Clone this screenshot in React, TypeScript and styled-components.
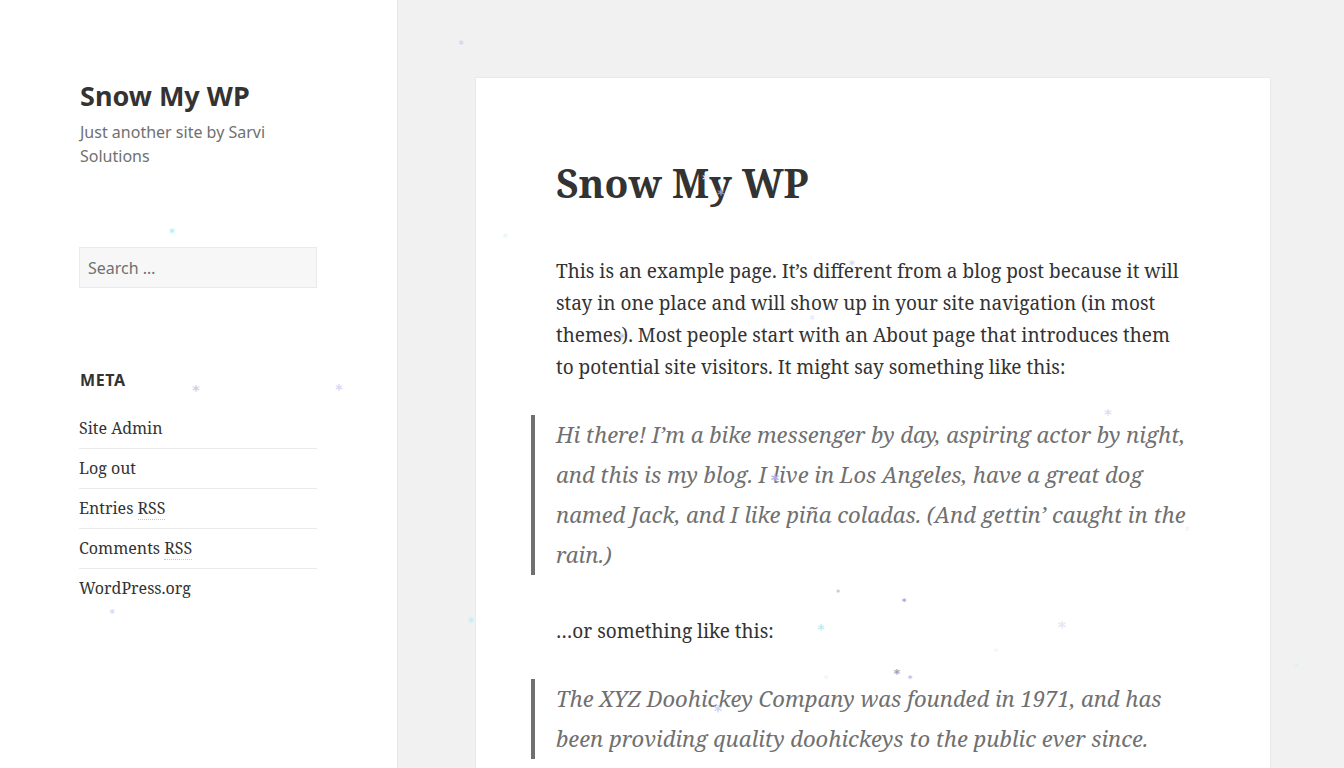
import React from "react";
import styled, { createGlobalStyle } from "styled-components";

const Global = createGlobalStyle`
  html, body { margin: 0; padding: 0; }
  body { background: #f1f1f1; overflow: hidden; }
`;

const serif = `"Noto Serif", "DejaVu Serif Condensed", "DejaVu Serif", serif`;
const sans = `"Noto Sans", "Open Sans", sans-serif`;

const Page = styled.div`
  position: relative;
  display: flex;
  height: 768px;
  overflow: hidden;
  background: #f1f1f1;
`;

const Sidebar = styled.aside`
  width: 397px;
  flex: none;
  background: #fff;
  box-shadow: 0 0 1px rgba(0, 0, 0, 0.25);
  padding: 77px 0 0 79px;
  box-sizing: border-box;
`;

const SideInner = styled.div`
  width: 238px;
`;

const SiteTitle = styled.h1`
  margin: 0;
  padding-left: 1px;
  font-family: ${sans};
  font-weight: 700;
  font-size: 27px;
  line-height: 38px;
  color: #333;
`;

const Description = styled.p`
  margin: 5px 0 0;
  padding-left: 1px;
  font-family: ${sans};
  font-size: 16px;
  line-height: 24px;
  color: #707070;
`;

const SearchBox = styled.div`
  margin-top: 79px;
  height: 41px;
  box-sizing: border-box;
  border: 1px solid #eaeaea;
  background: #f7f7f7;
  padding: 0 8px;
  display: flex;
  align-items: center;
  font-family: ${sans};
  font-size: 16px;
  color: #707070;
`;

const WidgetTitle = styled.h2`
  margin: 80px 0 16px;
  padding-left: 1px;
  font-family: ${sans};
  font-weight: 700;
  font-size: 16px;
  line-height: 24px;
  letter-spacing: 0.04em;
  text-transform: uppercase;
  color: #333;
`;

const LinkList = styled.ul`
  list-style: none;
  margin: 0;
  padding: 0;
`;

const LinkItem = styled.li<{ $first?: boolean }>`
  border-top: 1px solid ${(p) => (p.$first ? "transparent" : "#eaeaea")};
  padding: 7px 0 8px;
  font-family: ${serif};
  font-size: 16px;
  line-height: 24px;
  color: #333;
`;

const Abbr = styled.abbr`
  text-decoration: none;
  border-bottom: 1px dotted #c8c8c8;
`;

const Main = styled.main`
  flex: 1;
  padding: 78px 74px 0 79px;
`;

const Card = styled.article`
  background: #fff;
  box-shadow: 0 0 1px rgba(0, 0, 0, 0.2);
  padding: 81px 80px 60px;
  min-height: 800px;
`;

const EntryTitle = styled.h1`
  margin: 0 0 48px;
  font-family: ${serif};
  font-weight: 700;
  font-size: 39px;
  line-height: 48px;
  color: #333;
`;

const Para = styled.p`
  margin: 0 0 32px;
  font-family: ${serif};
  font-size: 19px;
  line-height: 32px;
  color: #333;
  white-space: nowrap;
`;

const Quote = styled.blockquote`
  margin: 0 0 40px -25px;
  padding-left: 21px;
  border-left: 4px solid #707070;
  font-family: ${serif};
  font-style: italic;
  font-size: 22px;
  line-height: 40px;
  color: #707070;
  white-space: nowrap;
`;

const QuoteText = styled.span`
  display: block;
  position: relative;
  top: -1px;
`;

const Flake = styled.span<{ $c: string; $s: number }>`
  position: absolute;
  font-family: "DejaVu Sans", sans-serif;
  font-weight: 700;
  color: ${(p) => p.$c};
  font-size: ${(p) => p.$s}px;
  line-height: 1;
  pointer-events: none;
  transform: translate(-50%, -50%);
`;

const flakes: [number, number, string, number][] = [
  [461, 45, "#d4d4f5", 10],
  [172, 233, "#b8f0f8", 12],
  [196, 390, "#cfcfe6", 14],
  [339, 389, "#d6d6f8", 14],
  [112, 614, "#d6d6f0", 10],
  [505, 238, "#e6f6fa", 10],
  [706, 179, "#eeeeee", 14],
  [721, 194, "#9a9acc", 14],
  [852, 265, "#dadaf5", 12],
  [812, 320, "#eaeaf5", 10],
  [622, 338, "#cacae8", 12],
  [1108, 414, "#dcdcfa", 14],
  [775, 481, "#b0b0e0", 16],
  [1187, 531, "#e8f8fb", 10],
  [838, 594, "#c8c8dc", 8],
  [904, 602, "#a8a8d0", 9],
  [471, 622, "#c0f0f0", 12],
  [821, 629, "#b8eef4", 14],
  [1062, 628, "#e6e6f4", 16],
  [996, 653, "#eef6f8", 8],
  [897, 673, "#a0a0c0", 13],
  [910, 679, "#c0c0dc", 9],
  [718, 712, "#d4d4f2", 15],
  [1296, 667, "#d0f4f4", 7],
  [826, 680, "#eef4f8", 8],
];

export default function App() {
  return (
    <>
      <Global />
      <Page>
        <Sidebar>
          <SideInner>
            <SiteTitle>Snow My WP</SiteTitle>
            <Description>Just another site by Sarvi Solutions</Description>
            <SearchBox>Search …</SearchBox>
            <WidgetTitle>Meta</WidgetTitle>
            <LinkList>
              <LinkItem $first>Site Admin</LinkItem>
              <LinkItem>Log out</LinkItem>
              <LinkItem>
                Entries <Abbr>RSS</Abbr>
              </LinkItem>
              <LinkItem>
                Comments <Abbr>RSS</Abbr>
              </LinkItem>
              <LinkItem>WordPress.org</LinkItem>
            </LinkList>
          </SideInner>
        </Sidebar>
        <Main>
          <Card>
            <EntryTitle>Snow My WP</EntryTitle>
            <Para>
              This is an example page. It’s different from a blog post because it will
              <br />
              stay in one place and will show up in your site navigation (in most
              <br />
              themes). Most people start with an About page that introduces them
              <br />
              to potential site visitors. It might say something like this:
            </Para>
            <Quote>
              <QuoteText>
                Hi there! I’m a bike messenger by day, aspiring actor by night,
                <br />
                and this is my blog. I live in Los Angeles, have a great dog
                <br />
                named Jack, and I like piña coladas. (And gettin’ caught in the
                <br />
                rain.)
              </QuoteText>
            </Quote>
            <Para>…or something like this:</Para>
            <Quote>
              <QuoteText>
                The XYZ Doohickey Company was founded in 1971, and has
                <br />
                been providing quality doohickeys to the public ever since.
              </QuoteText>
            </Quote>
          </Card>
        </Main>
        {flakes.map(([x, y, c, s], i) => (
          <Flake key={i} $c={c} $s={s} style={{ left: x, top: y }}>
            *
          </Flake>
        ))}
      </Page>
    </>
  );
}
